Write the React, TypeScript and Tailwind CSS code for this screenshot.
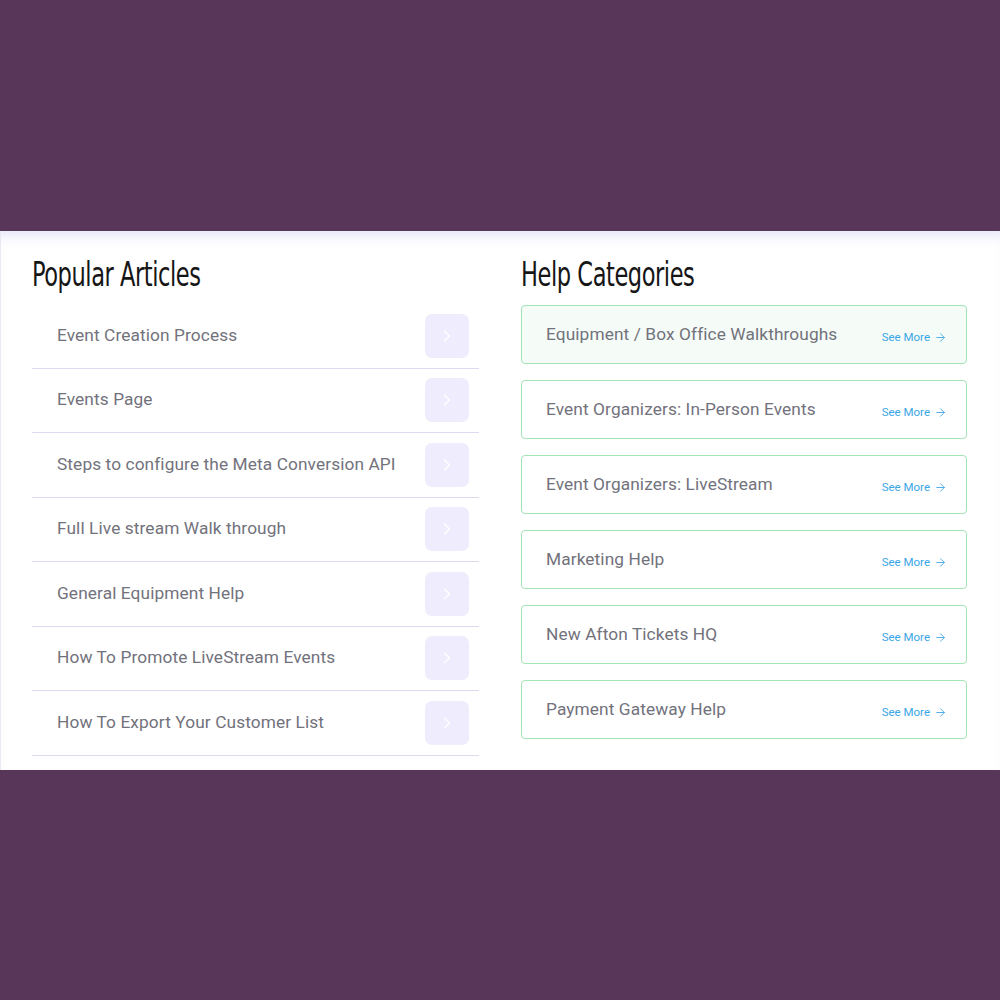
import { ChevronRight, ArrowRight } from 'lucide-react';

const ARTICLES = [
  'Event Creation Process',
  'Events Page',
  'Steps to configure the Meta Conversion API',
  'Full Live stream Walk through',
  'General Equipment Help',
  'How To Promote LiveStream Events',
  'How To Export Your Customer List',
];

const CATEGORIES = [
  'Equipment / Box Office Walkthroughs',
  'Event Organizers: In-Person Events',
  'Event Organizers: LiveStream',
  'Marketing Help',
  'New Afton Tickets HQ',
  'Payment Gateway Help',
];

const HEADING_FONT = {
  fontFamily: '"Liberation Sans Narrow", "DejaVu Sans Condensed", "Roboto", sans-serif',
};

export default function App() {
  return (
    <div className="w-[1000px] h-[1000px] bg-[#573659] flex flex-col" style={{ fontFamily: 'Roboto, "Liberation Sans", sans-serif' }}>
      <div className="h-[231px] flex-none" />

      <section className="h-[539px] flex-none bg-white border-l border-[#e9e9f2] shadow-[inset_0_14px_14px_-10px_rgba(225,225,248,0.9)] pl-[31px] pr-[32px] pt-[22px] grid grid-cols-[447px_446px] gap-x-[42px]">
        {/* Popular Articles */}
        <div className="flex flex-col">
          <h2
            className="h-[51px] text-[33px] leading-[44px] text-[#161616] font-normal tracking-[-0.6px] scale-x-[0.76] origin-left whitespace-nowrap"
            style={HEADING_FONT}
          >
            Popular Articles
          </h2>
          <ul className="flex flex-col">
            {ARTICLES.map((a) => (
              <li
                key={a}
                className="h-[64.5px] border-b border-[#dcdaf0] flex items-center justify-between pl-[25px] pr-[10px]"
              >
                <span className="text-[17.3px] text-[#72727c] tracking-[0.1px]">{a}</span>
                <span className="w-[44px] h-[44px] rounded-[7px] bg-[#efedfd] flex items-center justify-center">
                  <ChevronRight className="w-[20px] h-[20px] text-white" strokeWidth={1.4} />
                </span>
              </li>
            ))}
          </ul>
        </div>

        {/* Help Categories */}
        <div className="flex flex-col">
          <h2
            className="h-[52px] text-[33px] leading-[44px] text-[#161616] font-normal tracking-[-0.6px] scale-x-[0.76] origin-left whitespace-nowrap"
            style={HEADING_FONT}
          >
            Help Categories
          </h2>
          <ul className="flex flex-col gap-[16px]">
            {CATEGORIES.map((c, i) => (
              <li
                key={c}
                className={`h-[59px] rounded-[4px] border-[1.5px] border-[#a3e4b5] flex items-center justify-between pl-[24px] pr-[19px] ${
                  i === 0 ? 'bg-[#f5fcf7]' : 'bg-white'
                }`}
              >
                <span className="text-[17.3px] text-[#72727c] tracking-[0.1px]">{c}</span>
                <span className="inline-flex items-center gap-[4px] text-[11.5px] text-[#3aa6e6] translate-y-[3px]">
                  See More
                  <ArrowRight className="w-[13px] h-[13px]" strokeWidth={1.6} />
                </span>
              </li>
            ))}
          </ul>
        </div>
      </section>

      <div className="flex-1" />
    </div>
  );
}
